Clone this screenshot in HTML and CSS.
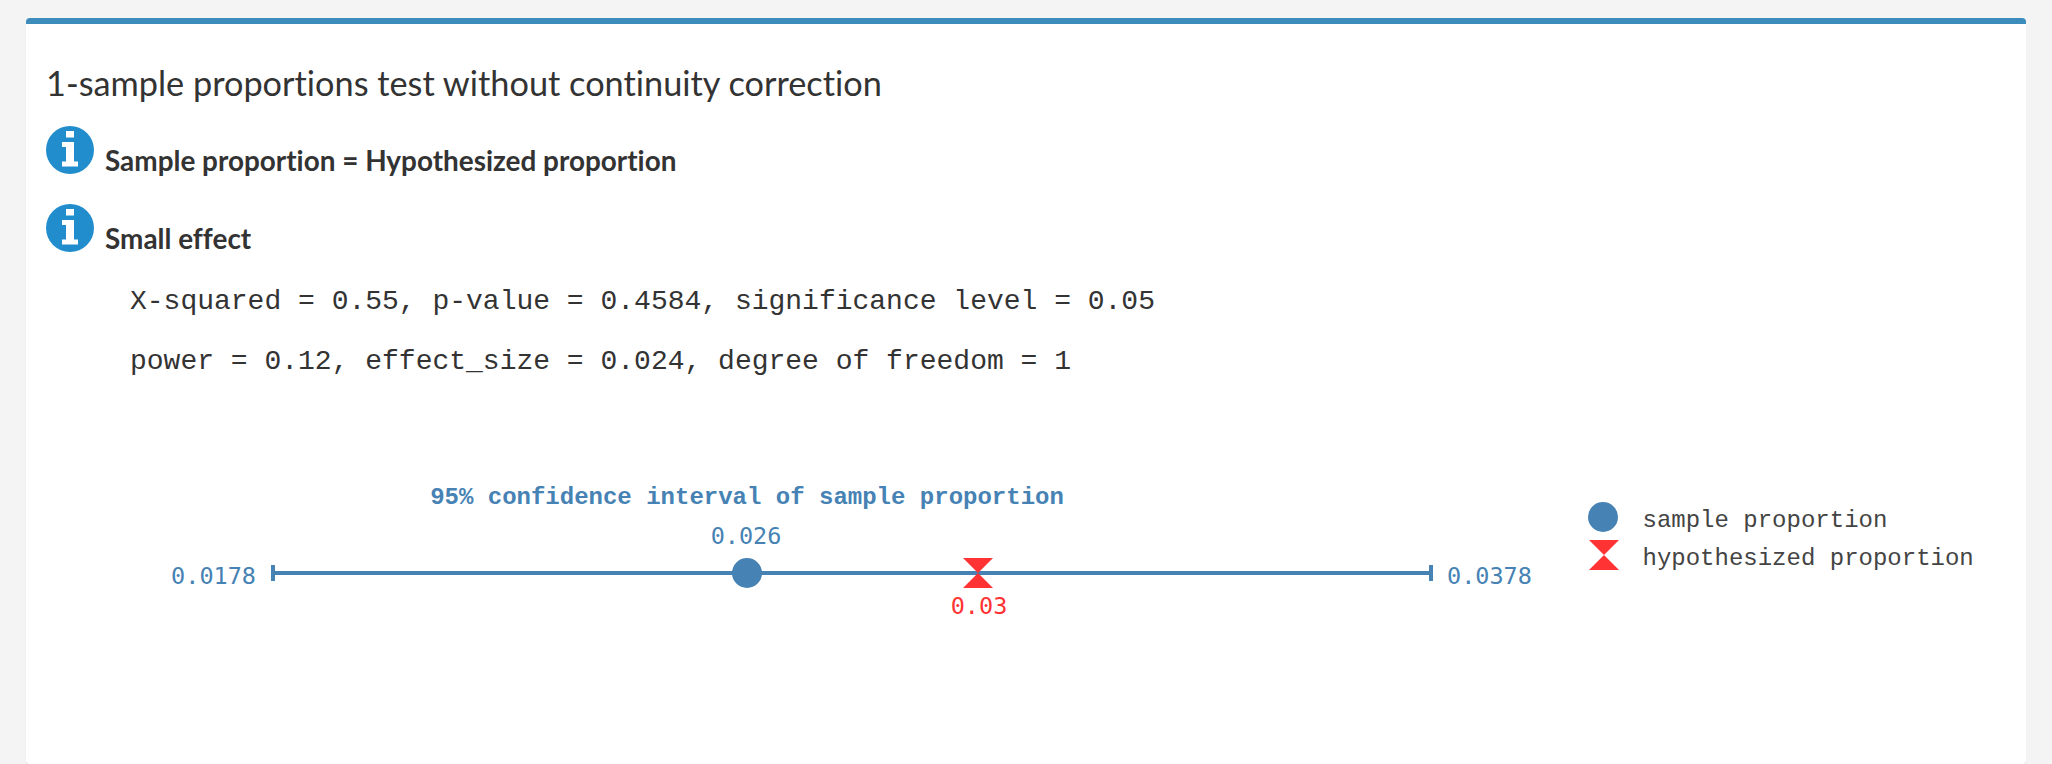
FILE: index.html
```html
<!DOCTYPE html>
<html lang="en">
<head>
    <meta charset="UTF-8">
    <meta name="viewport" content="width=device-width, initial-scale=1.0">
    <title>1-sample proportions test</title>
    <link rel="stylesheet" href="styles.css">
</head>
<body>
    <div class="box">
        <h3 class="box-title">1-sample proportions test without continuity correction</h3>
        <div class="note">
            <svg class="info-icon" viewBox="0 0 48 48">
                <circle cx="24" cy="24" r="24" fill="#228dcd"/>
                <path d="M20 5h8v6.500h-8z M16 16h12v19.500h4v5h-16v-5h4v-14.500h-4z" fill="#fff"/>
            </svg>
            <strong>Sample proportion = Hypothesized proportion</strong>
        </div>
        <div class="note">
            <svg class="info-icon" viewBox="0 0 48 48">
                <circle cx="24" cy="24" r="24" fill="#228dcd"/>
                <path d="M20 5h8v6.500h-8z M16 16h12v19.500h4v5h-16v-5h4v-14.500h-4z" fill="#fff"/>
            </svg>
            <strong>Small effect</strong>
        </div>
        <div class="stats">
            <p>X-squared = 0.55, p-value = 0.4584, significance level = 0.05</p>
            <p>power = 0.12, effect_size = 0.024, degree of freedom = 1</p>
        </div>
        <svg class="chart" width="2000" height="240" viewBox="26 440 2000 240">
            <text class="chart-title" x="747" y="503.500" text-anchor="middle">95% confidence interval of sample proportion</text>
            <line class="ci" x1="272" y1="573" x2="1431" y2="573"/>
            <line class="ci" x1="273" y1="565" x2="273" y2="581"/>
            <line class="ci" x1="1431" y1="565" x2="1431" y2="581"/>
            <circle cx="747" cy="573" r="15" fill="#4682b4"/>
            <path d="M963 558h30l-30 30h30z" fill="#ff3333"/>
            <text class="val" x="256" y="584" text-anchor="end">0.0178</text>
            <text class="val" x="746" y="544" text-anchor="middle">0.026</text>
            <text class="val" x="1447" y="584">0.0378</text>
            <text class="val val-red" x="979" y="614" text-anchor="middle">0.03</text>
            <circle cx="1603" cy="517" r="15" fill="#4682b4"/>
            <path d="M1589 540h30l-30 30h30z" fill="#ff3333"/>
            <text class="legend" x="1642.500" y="527">sample proportion</text>
            <text class="legend" x="1642.500" y="565">hypothesized proportion</text>
        </svg>
    </div>
</body>
</html>
```

FILE: styles.css
```css
html, body {
    height: 100%;
}
body {
    margin: 0;
    background-color: #f4f4f4;
    font-family: Lato, "Noto Sans", sans-serif;
    font-variant-ligatures: none;
    color: #333;
    overflow: hidden;
}
.box {
    margin: 18px 26px 0 26px;
    min-height: 746px;
    box-sizing: border-box;
    padding: 39px 20px 0 20px;
    background-color: #fff;
    border-top: 6px solid #3c8dbc;
    border-radius: 4px;
    box-shadow: 0 1px 1px rgba(0, 0, 0, 0.1);
}
.box-title {
    margin: 0;
    font-size: 34.300px;
    line-height: 40px;
    font-weight: 400;
}
.note {
    display: flex;
    align-items: flex-end;
    gap: 11px;
    margin-top: 23px;
}
.note + .note {
    margin-top: 30px;
}
.note strong {
    margin-bottom: -2px;
    font-size: 27.900px;
    line-height: 32px;
    font-weight: 700;
}
.info-icon {
    width: 48px;
    height: 48px;
    flex: none;
}
.stats {
    margin-top: 30px;
    padding-left: 84px;
    font-family: "Liberation Mono", monospace;
    font-size: 28px;
    line-height: 40px;
}
.stats p {
    margin: 0 0 20px 0;
}
.chart {
    display: block;
    margin: 58px 0 0 -20px;
}
.chart-title {
    font-family: "Liberation Mono", monospace;
    font-size: 24px;
    font-weight: 700;
    fill: #4682b4;
}
.ci {
    stroke: #4682b4;
    stroke-width: 4;
}
.val {
    font-family: "DejaVu Sans Mono", monospace;
    font-size: 23.500px;
    fill: #4682b4;
}
.val-red {
    fill: #ff3333;
}
.legend {
    font-family: "Liberation Mono", monospace;
    font-size: 24px;
    fill: #444;
}
```
